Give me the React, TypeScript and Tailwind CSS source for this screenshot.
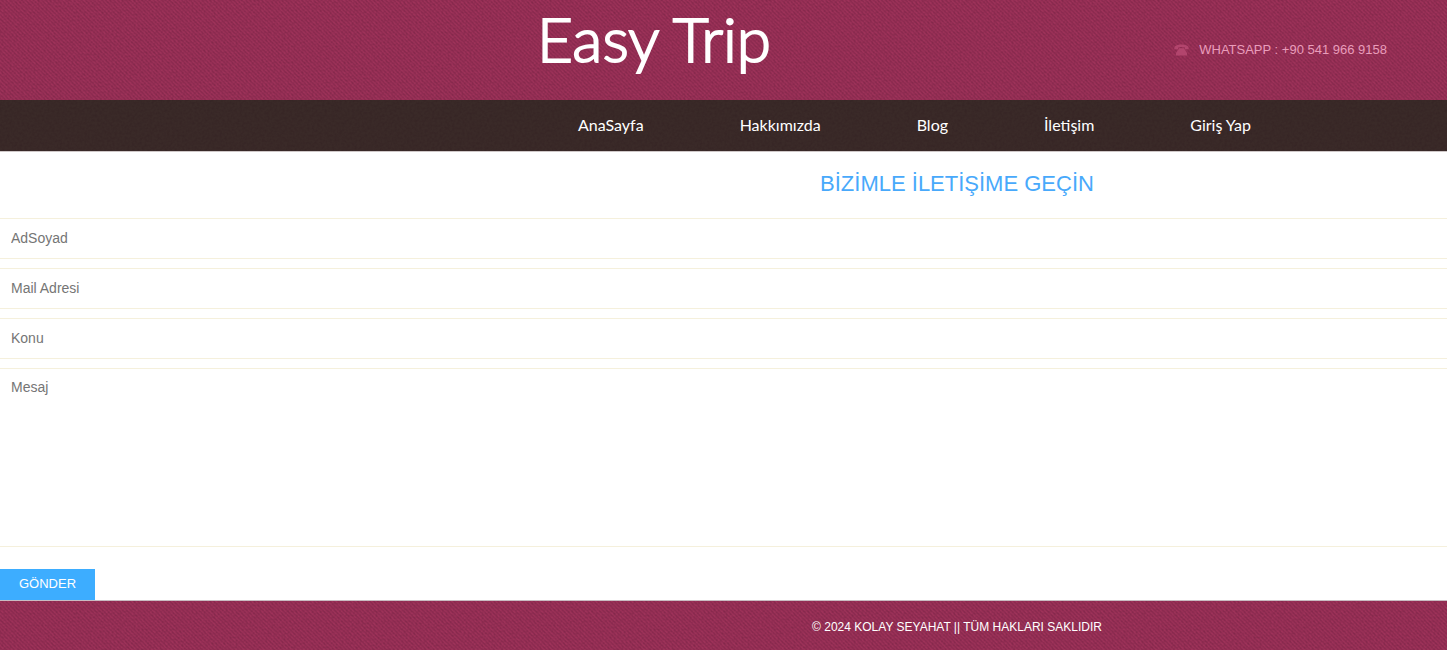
import React from 'react';

const links = ['AnaSayfa', 'Hakkımızda', 'Blog', 'İletişim', 'Giriş Yap'];

const weave =
  'relative isolate bg-[#9d3259] bg-[linear-gradient(45deg,rgba(70,10,45,0.12)_25%,transparent_25%,transparent_50%,rgba(70,10,45,0.12)_50%,rgba(70,10,45,0.12)_75%,transparent_75%)] bg-size-[4px_4px]';
const grain = 'relative isolate bg-[#3a2a28]';
const field =
  'block w-full border-y border-[#f5f0dc] bg-white px-[11px] text-sm text-[#333] outline-none placeholder:text-[#757575]';

function Noise({ id, scale }: { id: string; scale: string }) {
  return (
    <svg className="pointer-events-none absolute inset-0 -z-10 size-full" aria-hidden="true">
      <filter id={id} x="0" y="0" width="100%" height="100%" colorInterpolationFilters="sRGB">
        <feTurbulence type="fractalNoise" baseFrequency={scale} numOctaves="2" />
        <feColorMatrix values="0 0 0 0 0.1  0 0 0 0 0  0 0 0 0 0.05  0.24 0 0 0 -0.08" />
      </filter>
      <rect width="100%" height="100%" filter={`url(#${id})`} />
    </svg>
  );
}

function PhoneIcon() {
  return (
    <svg width="15" height="12" viewBox="0 0 15 12" fill="#b2456d" aria-hidden="true">
      <path d="M0.3 4.4C0.3 1.8 3.6 0.6 7.5 0.6s7.2 1.2 7.2 3.8v0.8h-3.8V3.6C9 2.9 6 2.9 4.1 3.6v1.6H0.3z" />
      <path d="M5 4.2h5l0.8 1.6 2.2 3.2v2.5H2V9l2.2-3.2z" />
    </svg>
  );
}

export default function App() {
  return (
    <div className="min-h-screen bg-white font-['Liberation_Sans',Arial,sans-serif]">
      <header className={`flex h-[100px] items-start justify-between pr-[60px] pl-[537px] ${weave}`}>
        <Noise id="header-noise" scale="0.5" />
        <a
          href="#"
          className="pt-[2px] font-[Lato,sans-serif] text-[62px] leading-[72px] font-light whitespace-nowrap text-white [-webkit-text-stroke:2px_white]"
        >
          Easy Trip
        </a>
        <p className="flex items-center gap-[10px] pt-10 text-[13px] leading-5 whitespace-nowrap text-[#e99dbb]">
          <PhoneIcon />
          WHATSAPP : +90 541 966 9158
        </p>
      </header>

      <nav className={`border-b border-[#cfc8c8] pl-[578px] ${grain}`}>
        <Noise id="nav-noise" scale="0.4" />
        <ul className="flex h-[51px] items-center gap-24 pb-[2px] font-[Lato,sans-serif] text-base whitespace-nowrap text-white">
          {links.map((label) => (
            <li key={label}>
              <a href="#">{label}</a>
            </li>
          ))}
        </ul>
      </nav>

      <main>
        <h1 className="pt-4 pb-[18px] pl-[467px] text-center text-[22px] leading-8 text-[#48a9fb]">
          BİZİMLE İLETİŞİME GEÇİN
        </h1>
        <form onSubmit={(e) => e.preventDefault()}>
          <div className="flex flex-col gap-[9px]">
            <input className={`${field} h-[41px] pb-[2px]`} aria-label="AdSoyad" placeholder="AdSoyad" />
            <input className={`${field} h-[41px] pb-[2px]`} type="email" aria-label="Mail Adresi" placeholder="Mail Adresi" />
            <input className={`${field} h-[41px] pb-[2px]`} aria-label="Konu" placeholder="Konu" />
            <textarea
              className={`${field} h-[179px] resize-none py-2`}
              aria-label="Mesaj"
              placeholder="Mesaj"
            />
          </div>
          <button
            type="submit"
            className="mt-[22px] block h-[31px] bg-[#3dadff] px-[19px] pb-[2px] text-[13px] text-white"
          >
            GÖNDER
          </button>
        </form>
      </main>

      <footer className={`border-t border-[#c9bcc2] bg-clip-padding pt-4 pb-[13px] pl-[467px] text-center text-xs leading-5 text-white ${weave}`}>
        <Noise id="footer-noise" scale="0.5" />
        © 2024 KOLAY SEYAHAT || TÜM HAKLARI SAKLIDIR
      </footer>
    </div>
  );
}
